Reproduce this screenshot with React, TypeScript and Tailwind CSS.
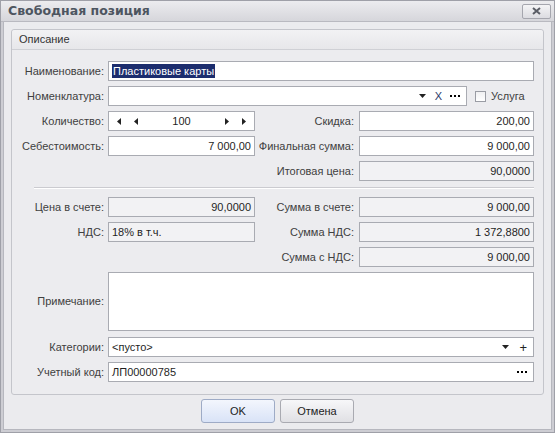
import React from "react";

const font = "font-['Liberation_Sans',Arial,sans-serif]";

const Field: React.FC<{
  value?: string;
  readOnly?: boolean;
  className?: string;
  align?: "left" | "right" | "between";
  children?: React.ReactNode;
}> = ({ value, readOnly, className = "", align = "right", children }) => {
  const justify =
    align === "right" ? "justify-end" : align === "between" ? "justify-between" : "justify-start";
  return (
    <div
      className={`h-[20px] border border-[#a9abb2] flex items-center px-[3px] text-[11px] text-[#1f1f1f] ${
        readOnly ? "bg-[#f2f2f4]" : "bg-white"
      } ${justify} ${className}`}
    >
      {value}
      {children}
    </div>
  );
};

const Label: React.FC<{ text: string; w: string }> = ({ text, w }) => (
  <div className={`${w} shrink-0 text-right text-[11px] text-[#404040] leading-none`}>{text}</div>
);

const Dots = () => (
  <span className="flex gap-[2px] items-center">
    <span className="w-[2px] h-[2px] bg-black" />
    <span className="w-[2px] h-[2px] bg-black" />
    <span className="w-[2px] h-[2px] bg-black" />
  </span>
);

const Down = () => (
  <svg width="7" height="4" viewBox="0 0 7 4">
    <path d="M0 0h7L3.5 4z" fill="#222" />
  </svg>
);

const Tri: React.FC<{ dir: "l" | "r" }> = ({ dir }) => (
  <svg width="4" height="7" viewBox="0 0 4 7">
    <path d={dir === "l" ? "M4 0v7L0 3.5z" : "M0 0v7l4-3.5z"} fill="#222" />
  </svg>
);

const PairRow: React.FC<{
  left?: [string, string, boolean?];
  right: [string, string, boolean?];
  className?: string;
}> = ({ left, right, className = "" }) => (
  <div className={`flex items-center ${className}`}>
    {left ? (
      <>
        <Label text={left[0]} w="w-[92px]" />
        <Field
          value={left[1]}
          readOnly={left[2]}
          className="ml-[4px] w-[147px]"
          align={left[0] === "НДС:" ? "left" : "right"}
        />
      </>
    ) : (
      <div className="w-[243px]" />
    )}
    <Label text={right[0]} w="w-[99px]" />
    <Field value={right[1]} readOnly={right[2]} className="ml-[5px] flex-1" />
  </div>
);

export default function App() {
  return (
    <div className={`w-[555px] h-[433px] flex flex-col bg-[#cdcdd3] border border-[#9fa0a8] ${font}`}>
      {/* TITLE */}
      <div className="h-[21px] shrink-0 flex items-center justify-between pl-[7px] pr-[3px] bg-gradient-to-b from-[#ececef] to-[#d6d6db] border-b border-[#b9b9c0]">
        <span className="font-['DejaVu_Sans',sans-serif] text-[12.5px] font-bold text-[#4d5560]">
          Свободная позиция
        </span>
        <div className="w-[29px] h-[15px] rounded-[2px] border border-[#a5a6ae] bg-gradient-to-b from-[#f4f4f6] to-[#dcdce1] flex items-center justify-center">
          <svg width="9" height="8" viewBox="0 0 9 8">
            <path d="M1 1l7 6M8 1L1 7" stroke="#5a5d66" strokeWidth="2" />
          </svg>
        </div>
      </div>

      {/* BODY */}
      <div className="flex-1 flex flex-col mx-[2px] mb-[2px] bg-[#ebebee] border-x border-b border-[#b6b7be]">
        {/* GROUP */}
        <div className="mt-[7px] ml-[7px] mr-[7px] border border-[#c4c5cb] rounded-[3px] bg-[#ececef]">
          <div className="h-[20px] flex items-center pl-[7px] text-[11px] text-[#333] border-b border-[#cfd0d5] bg-gradient-to-b from-[#f2f2f4] to-[#e7e7ea] rounded-t-[3px]">
            Описание
          </div>

          <div className="pt-[11px] pb-[12px] pr-[9px] flex flex-col">
            {/* Наименование */}
            <div className="flex items-center mb-[5px]">
              <Label text="Наименование:" w="w-[92px]" />
              <Field className="ml-[4px] flex-1" align="left">
                <span className="bg-[#1c2d6e] text-white px-[1px] leading-[14px]">Пластиковые карты</span>
              </Field>
            </div>

            {/* Номенклатура */}
            <div className="flex items-center mb-[5px]">
              <Label text="Номенклатура:" w="w-[92px]" />
              <Field className="ml-[4px] w-[359px]">
                <Down />
                <span className="ml-[9px] text-[11px] text-[#2a3a6a]">X</span>
                <span className="ml-[8px] mr-[3px]">
                  <Dots />
                </span>
              </Field>
              <div className="ml-[8px] w-[11px] h-[11px] border border-[#9a9ca4] bg-gradient-to-b from-[#f0f0f2] to-white" />
              <span className="ml-[5px] text-[11px] text-[#404040]">Услуга</span>
            </div>

            {/* Количество */}
            <div className="flex items-center mb-[5px]">
              <Label text="Количество:" w="w-[92px]" />
              <div className="ml-[4px] w-[147px] h-[20px] border border-[#a9abb2] bg-white flex items-center px-[8px] text-[11px] text-[#1f1f1f]">
                <Tri dir="l" />
                <span className="ml-[13px] flex">
                  <Tri dir="l" />
                </span>
                <span className="flex-1 text-center">100</span>
                <Tri dir="r" />
                <span className="ml-[13px] flex">
                  <Tri dir="r" />
                </span>
              </div>
              <Label text="Скидка:" w="w-[99px]" />
              <Field value="200,00" className="ml-[5px] flex-1" />
            </div>

            <PairRow
              className="mb-[5px]"
              left={["Себестоимость:", "7 000,00"]}
              right={["Финальная сумма:", "9 000,00"]}
            />
            <PairRow right={["Итоговая цена:", "90,0000", true]} />

            <div className="ml-[22px] mt-[6px] mb-[8px] h-px bg-[#cbcbd0] border-b border-white box-content" />

            <PairRow
              className="mb-[5px]"
              left={["Цена в счете:", "90,0000", true]}
              right={["Сумма в счете:", "9 000,00", true]}
            />
            <PairRow
              className="mb-[5px]"
              left={["НДС:", "18% в т.ч.", true]}
              right={["Сумма НДС:", "1 372,8800", true]}
            />
            <PairRow className="mb-[5px]" right={["Сумма с НДС:", "9 000,00", true]} />

            {/* Примечание */}
            <div className="flex items-center mb-[6px]">
              <Label text="Примечание:" w="w-[92px]" />
              <div className="ml-[4px] flex-1 h-[59px] border border-[#a9abb2] bg-white" />
            </div>

            {/* Категории */}
            <div className="flex items-center mb-[5px]">
              <Label text="Категории:" w="w-[92px]" />
              <Field className="ml-[4px] flex-1" align="between">
                <span>&lt;пусто&gt;</span>
                <span className="flex items-center">
                  <Down />
                  <span className="ml-[10px] mr-[3px] text-[13px] leading-none text-[#222]">+</span>
                </span>
              </Field>
            </div>

            {/* Учетный код */}
            <div className="flex items-center">
              <Label text="Учетный код:" w="w-[92px]" />
              <Field className="ml-[4px] flex-1" align="between">
                <span>ЛП00000785</span>
                <span className="mr-[3px]">
                  <Dots />
                </span>
              </Field>
            </div>
          </div>
        </div>

        {/* BUTTONS */}
        <div className="flex justify-center gap-[5px] mt-[4px]">
          <button className="w-[74px] h-[24px] rounded-[3px] border border-[#9eabc6] bg-gradient-to-b from-[#f3f6fd] to-[#d9e3f7] text-[11px] text-[#222]">
            OK
          </button>
          <button className="w-[74px] h-[24px] rounded-[3px] border border-[#a9aab1] bg-gradient-to-b from-[#f7f7f9] to-[#e0e0e4] text-[11px] text-[#222]">
            Отмена
          </button>
        </div>
      </div>
    </div>
  );
}
